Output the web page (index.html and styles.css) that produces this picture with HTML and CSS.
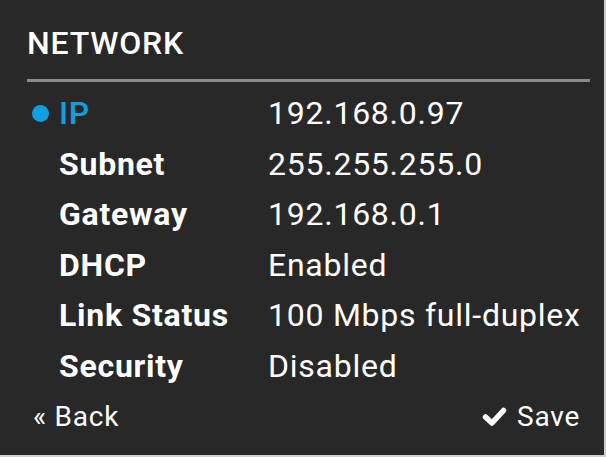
FILE: index.html
```html
<!DOCTYPE html>
<html>
<head>
<meta charset="utf-8">
<link rel="stylesheet" href="styles.css">
</head>
<body>
<div class="screen">
  <h1 class="title">NETWORK</h1>
  <div class="divider"></div>
  <div class="rows">
    <div class="row selected"><span class="bullet"></span><span class="label">IP</span><span class="value">192.168.0.97</span></div>
    <div class="row"><span class="bullet"></span><span class="label">Subnet</span><span class="value">255.255.255.0</span></div>
    <div class="row"><span class="bullet"></span><span class="label">Gateway</span><span class="value">192.168.0.1</span></div>
    <div class="row"><span class="bullet"></span><span class="label">DHCP</span><span class="value">Enabled</span></div>
    <div class="row"><span class="bullet"></span><span class="label">Link Status</span><span class="value">100 Mbps full-duplex</span></div>
    <div class="row"><span class="bullet"></span><span class="label">Security</span><span class="value">Disabled</span></div>
  </div>
  <div class="footer">
    <span class="back">« Back</span>
    <span class="save"><svg class="check" width="25" height="19" viewBox="0 0 25 19"><polyline points="3.5,10 10,16 21.5,3.5" fill="none" stroke="#fff" stroke-width="5.5" stroke-linecap="round" stroke-linejoin="round"/></svg>Save</span>
  </div>
</div>
</body>
</html>
```
FILE: styles.css
```css
html, body {
  margin: 0;
  padding: 0;
  background: #cfcfcf;
}
.screen {
  width: 604px;
  height: 455px;
  box-sizing: border-box;
  background: #282828;
  padding: 27px 14px 0 27px;
  font-family: Roboto, "Liberation Sans", sans-serif;
  color: #ffffff;
  overflow: hidden;
}
.title {
  margin: 0;
  font-size: 32px;
  line-height: 32px;
  font-weight: 500;
  letter-spacing: 0.8px;
}
.divider {
  margin-top: 20px;
  height: 3px;
  background: #8a8a8a;
}
.rows {
  margin-top: 6px;
}
.row {
  display: grid;
  grid-template-columns: 32px 209px 1fr;
  align-items: center;
  font-size: 32px;
  line-height: 50.5px;
  letter-spacing: 0.75px;
}
.label {
  font-weight: 700;
}
.value {
  font-weight: 400;
}
.bullet {
  width: 17px;
  height: 17px;
  border-radius: 50%;
  margin-left: 5px;
  visibility: hidden;
  background: #0ea0e2;
}
.row.selected .bullet {
  visibility: visible;
}
.row.selected .label {
  color: #0ea0e2;
  font-weight: 500;
}
.footer {
  margin-top: 11.5px;
  display: flex;
  justify-content: space-between;
  align-items: center;
  font-size: 28px;
  line-height: 28px;
  letter-spacing: 0.75px;
  padding: 0 10px 0 6px;
}
.save {
  display: flex;
  align-items: center;
  gap: 10px;
}
.check {
  display: block;
}
```
